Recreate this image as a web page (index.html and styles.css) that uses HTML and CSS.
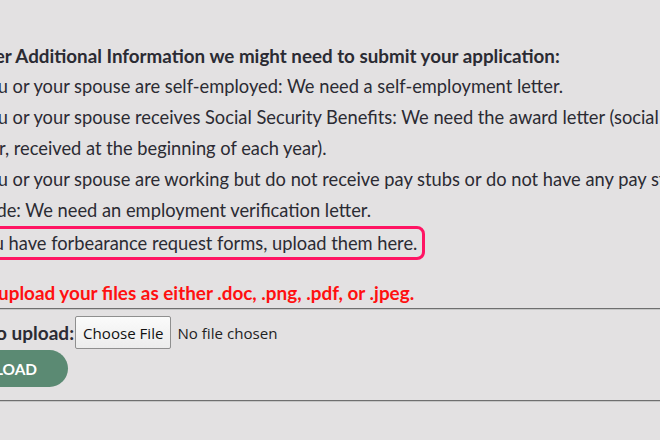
FILE: index.html
```html
<!DOCTYPE html>
<html>
<head>
<meta charset="utf-8">
<link rel="stylesheet" href="styles.css">
</head>
<body>
<div class="page">
  <div class="content">
    <p class="heading">Other Additional Information we might need to submit your application:</p>
    <p class="info">If you or your spouse are self-employed: We need a self-employment letter.</p>
    <p class="info">If you or your spouse receives Social Security Benefits: We need the award letter (social security<br>letter, received at the beginning of each year).</p>
    <p class="info">If you or your spouse are working but do not receive pay stubs or do not have any pay stubs to<br><span class="shift">provide: We need an employment verification letter.</span></p>
    <p class="info"><span class="highlight">If you have forbearance request forms, upload them here.</span></p>
    <p class="notice">Please upload your files as either .doc, .png, .pdf, or .jpeg.</p>
  </div>
  <hr class="rule">
  <form class="upload-form">
    <div class="file-row">
      <label class="file-label" for="file">File to upload:</label>
      <input class="file-input" type="file" id="file">
    </div>
    <button class="upload-btn" type="button">UPLOAD</button>
  </form>
  <hr class="rule">
</div>
</body>
</html>
```
FILE: styles.css
```css
html, body {
  margin: 0;
  padding: 0;
  overflow: hidden;
  background: #e3e1e2;
}
body {
  font-family: Lato, "Open Sans", sans-serif;
  font-size: 18.3px;
  color: #2b2b33;
}
.page {
  padding-top: 40px;
  white-space: nowrap;
}
.content {
  margin-left: -37px;
}
.heading {
  margin: 0;
  font-size: 18.8px;
  font-weight: 700;
  line-height: 31px;
  margin-left: -1px;
}
.info {
  margin: 0;
  line-height: 31px;
}
.shift {
  margin-left: -7px;
}
.highlight {
  display: inline-block;
  line-height: 28px;
  border: 3px solid #ff1463;
  border-radius: 8px;
  padding: 0 5px 0 10px;
  margin-left: -17px;
}
.notice {
  margin: 17px 0 0 -24px;
  line-height: 31px;
  font-size: 18.9px;
  font-weight: 700;
  color: #ff1010;
}
.rule {
  margin: 0;
  border: 0;
  border-top: 1px solid #6f6f6f;
  border-bottom: 1px solid #c6c6c6;
}
.upload-form {
  margin-left: -46px;
  padding-top: 6px;
}
.file-row {
  display: flex;
  align-items: center;
}
.file-label {
  font-size: 19px;
  font-weight: 700;
  margin-right: 1px;
}
.file-input {
  font-family: "Open Sans", sans-serif;
  font-size: 15.1px;
  color: #222;
}
.file-input::file-selector-button {
  font: inherit;
  color: #111;
  height: 33px;
  padding: 0 7px;
  margin-right: 6px;
  border: 1px solid #8f8f8f;
  border-radius: 2px;
  background: linear-gradient(#fbfbfb, #ececec);
}
.upload-btn {
  display: block;
  margin: 1px 0 13px -20px;
  height: 37px;
  padding: 0 31px 0 40px;
  border: 0;
  border-radius: 19px;
  background: #5b8a73;
  color: #fff;
  font-family: Lato, sans-serif;
  font-size: 15.4px;
  font-weight: 700;
}
```
